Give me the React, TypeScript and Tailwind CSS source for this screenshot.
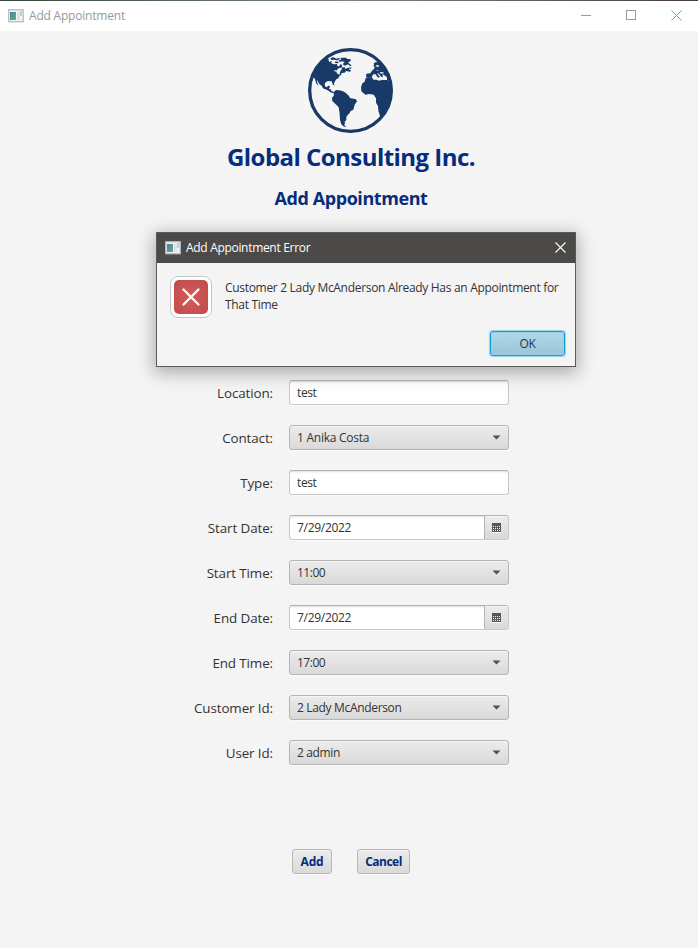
import React from 'react';

function AppIcon() {
  return (
    <svg width="16" height="14" viewBox="0 0 16 14" className="shrink-0">
      <defs>
        <linearGradient id="screen" x1="0" y1="0" x2="1" y2="1">
          <stop offset="0" stopColor="#4a7fa5" />
          <stop offset="1" stopColor="#5fae84" />
        </linearGradient>
      </defs>
      <rect x="0.75" y="0.75" width="14.5" height="12" fill="#f4f4f4" stroke="#b6bbbf" strokeWidth="1.3" />
      <rect x="2" y="3" width="6" height="8" fill="url(#screen)" />
      <rect x="9" y="3" width="3" height="8" fill="#dfe1e3" />
      <rect x="12" y="2" width="2" height="5" fill="#b5d6cf" />
    </svg>
  );
}

function Globe() {
  return (
    <svg width="100" height="100" viewBox="0 0 300 300" fill="#183a68">
      <clipPath id="disc">
        <circle cx="151.5" cy="151.5" r="125" />
      </clipPath>
      <g clipPath="url(#disc)">
        <path d="M30 110L60 65L85 55L87 66L95 63L94 70L102 73L111 72L112 78L119 79L120 72L127 76L125 83L117 84L111 89L108 94L112 101L119 104L120 96L124 90L127 82L134 82L137 88L141 84L147 83L149 90L154 92L150 95L138 93L134 98L125 99L123 105L118 108L115 115L109 118L105 124L102 130L103 137L98 133L95 124L84 123L77 127L74 132L75 139L80 142L85 137L90 139L87 147L94 149L94 154L101 155L102 160L94 158L83 151L69 145L65 137L58 132L51 119L52 129L57 137L49 131L45 117L39 110Z" />
        <path d="M91 54L100 52L109 56L118 54L120 57L112 61L103 59L94 60ZM121 53L138 53L142 57L153 58L151 64L144 67L150 73L155 76L151 79L144 73L135 77L128 73L134 66L126 64L120 66L115 62L124 58ZM107 64L117 66L113 70L104 69ZM146 82L155 83L151 88Z" />
        <path d="M102 155L108 150L118 151L127 153L137 158L147 168L150 174L168 178L171 184L164 194L160 209L152 213L149 219L143 225L139 231L139 240L134 245L135 251L132 255L139 260L132 260L124 253L120 240L119 222L116 202L107 193L97 183L96 173L101 168Z" />
        <path d="M197 114L205 112L216 112L220 119L230 119L237 122L246 120L263 120L285 145L270 200L247 226L240 228L235 212L234 198L228 188L228 175L221 164L208 162L196 164L184 154L183 142L187 130L194 125Z" />
        <path d="M199 101L211 100L216 92L221 88L225 80L221 80L222 68L232 66L240 64L270 90L285 122L263 120L261 119L261 112L253 106L247 102L249 110L244 111L239 104L234 99L232 102L240 110L234 113L226 102L218 104L216 111L207 113L198 112Z" />
      </g>
      <path d="M101 91L109 91L106 96ZM116 91L122 90L119 94ZM232 74L238 78L234 82L226 78ZM228 91L235 90L233 93ZM238 97L249 96L252 100L243 101Z" fill="#e0e4e8" />
      <circle cx="151.5" cy="151.5" r="122.5" fill="none" stroke="#183a68" strokeWidth="10" />
    </svg>
  );
}

function CalendarIcon() {
  return (
    <svg width="9" height="10" viewBox="0 0 9 10" shapeRendering="crispEdges">
      <path d="M0 0H9V9H0Z" fill="#555" />
      <path d="M1 3h1v1H1zM3 3h1v1H3zM5 3h1v1H5zM7 3h1v1H7zM1 5h1v1H1zM3 5h1v1H3zM5 5h1v1H5zM7 5h1v1H7zM1 7h1v1H1zM3 7h1v1H3zM5 7h1v1H5zM7 7h1v1H7z" fill="#f2f2f2" />
      <path d="M0 9H9V10H0Z" fill="#fff" />
    </svg>
  );
}

type Kind = 'text' | 'select' | 'date';

const fields: { label: string; value: string; kind: Kind; valueTrack: string }[] = [
  { label: 'Location:', value: 'test', kind: 'text', valueTrack: 'tracking-[-0.4px]' },
  { label: 'Contact:', value: '1 Anika Costa', kind: 'select', valueTrack: 'tracking-[-0.25px]' },
  { label: 'Type:', value: 'test', kind: 'text', valueTrack: 'tracking-[-0.4px]' },
  { label: 'Start Date:', value: '7/29/2022', kind: 'date', valueTrack: 'tracking-[-0.3px]' },
  { label: 'Start Time:', value: '11:00', kind: 'select', valueTrack: 'tracking-[-0.5px]' },
  { label: 'End Date:', value: '7/29/2022', kind: 'date', valueTrack: 'tracking-[-0.3px]' },
  { label: 'End Time:', value: '17:00', kind: 'select', valueTrack: 'tracking-[-0.5px]' },
  { label: 'Customer Id:', value: '2 Lady McAnderson', kind: 'select', valueTrack: 'tracking-[-0.33px]' },
  { label: 'User Id:', value: '2 admin', kind: 'select', valueTrack: 'tracking-[-0.35px]' },
];

const raised = 'bg-gradient-to-b from-[#ececec] to-[#d9d9d9] shadow-[inset_0_1px_0_#f5f5f5,0_1px_0_#fafafa]';

function Field({ value, kind, track }: { value: string; kind: Kind; track: string }) {
  const text = <span className={`whitespace-nowrap ${track}`}>{value}</span>;
  if (kind === 'select') {
    return (
      <div className={`flex h-[25px] w-[220px] items-center justify-between rounded-[3px] border border-[#b5b5b5] pl-[7px] pr-[7px] text-[12px] leading-4 ${raised}`}>
        {text}
        <svg width="9" height="5" viewBox="0 0 9 5"><path d="M0.5 0.5H8.5L4.5 4.6Z" fill="#505050" /></svg>
      </div>
    );
  }
  return (
    <div className="flex h-[25px] w-[220px] items-stretch overflow-hidden rounded-[3px] border border-[#c8c8c8] border-t-[#b2b2b2] bg-white text-[12px] leading-4 shadow-[inset_0_2px_2px_-1px_#dedede,0_1px_0_#fafafa]">
      <div className="flex flex-1 items-center pl-[7px]">{text}</div>
      {kind === 'date' && (
        <div className={`flex w-[24px] items-center justify-center border-l border-[#b5b5b5] ${raised}`}>
          <CalendarIcon />
        </div>
      )}
    </div>
  );
}

function ErrorDialog() {
  return (
    <div className="absolute left-[156px] top-[232px] flex h-[135px] w-[420px] flex-col border border-[#5a5a5a] bg-[#f4f4f4] shadow-[0_4px_16px_2px_rgba(0,0,0,0.3)]">
      <div className="flex h-[30px] shrink-0 items-center bg-[#4c4a48] pl-2 pr-[9px] text-[12px] text-white">
        <AppIcon />
        <span className="ml-[5px] flex-1 whitespace-nowrap tracking-[-0.31px]">Add Appointment Error</span>
        <svg width="11" height="11" viewBox="0 0 11 11" stroke="#fff" strokeWidth="1.1" className="mb-[2px]"><path d="M.5 .5L10.5 10.5M10.5 .5L.5 10.5" /></svg>
      </div>
      <div className="flex pl-[13px] pt-[13px]">
        <div className="flex h-[42px] w-[42px] shrink-0 items-center justify-center rounded-[8px] border border-[#c6c6c6] bg-white">
          <div className="flex h-[34px] w-[34px] items-center justify-center rounded-[5px] bg-[radial-gradient(#d95a5c,#bd4c49)]">
            <svg width="18" height="18" viewBox="0 0 18 18" stroke="#fff" strokeWidth="2.2" strokeLinecap="round"><path d="M1.5 1.5L16.5 16.5M16.5 1.5L1.5 16.5" /></svg>
          </div>
        </div>
        <p className="ml-[13px] mt-[3px] whitespace-nowrap text-[12px] leading-[17px] tracking-[-0.31px]">
          Customer 2 Lady McAnderson Already Has an Appointment for<br />That Time
        </p>
      </div>
      <button className="ml-[333px] mt-[13px] h-[25px] w-[75px] shrink-0 rounded-[3px] border border-[#0aa0d0] bg-gradient-to-b from-[#b1d9ea] to-[#9bc4d6] text-[12px] tracking-[-0.3px] shadow-[0_0_1px_1px_#8ed8ee,inset_0_0_0_1px_#9bcfe2]">
        OK
      </button>
    </div>
  );
}

export default function App() {
  return (
    <div className="relative flex h-[948px] w-[698px] flex-col overflow-hidden bg-[#f4f4f4] font-['Open_Sans','Noto_Sans',sans-serif] text-[#333]">
      <div className="h-px shrink-0 bg-gradient-to-r from-[#36463b] via-[#7a858a] to-[#4a3c35]" />
      <header className="flex h-[30px] shrink-0 items-center bg-white pl-2 pr-[16px] text-[12px] text-[#999]">
        <AppIcon />
        <span className="ml-[5px] flex-1 whitespace-nowrap tracking-[-0.2px]">Add Appointment</span>
        <svg width="101" height="11" viewBox="0 0 101 11" fill="none" stroke="#999" className="mb-[2px]">
          <path d="M0 5.5H10" />
          <rect x="45.5" y="0.5" width="9" height="9" />
          <path d="M90.5 .5L100.5 10.5M100.5 .5L90.5 10.5" />
        </svg>
      </header>
      <main className="flex flex-col">
        <div className="ml-[277px] mt-[9px] h-[100px] w-[147px] bg-[#f5f5f5] pl-[23px]">
          <Globe />
        </div>
        <h1 className="mt-[1px] w-[702px] text-center text-[24px] font-bold leading-8 tracking-[-0.54px] text-[#062c7c]">Global Consulting Inc.</h1>
        <h2 className="mt-[13px] w-[702px] text-center text-[18px] font-bold leading-6 tracking-[-0.43px] text-[#062c7c]">Add Appointment</h2>
        <div className="mt-[170px] flex flex-col gap-5">
          {fields.map((f) => (
            <div key={f.label} className="flex h-[25px] items-center">
              <label className="mr-[16px] w-[273px] whitespace-nowrap text-right text-[13.4px] leading-5 tracking-[-0.1px]">{f.label}</label>
              <Field value={f.value} kind={f.kind} track={f.valueTrack} />
            </div>
          ))}
        </div>
        <div className="mt-[84px] flex gap-[25px] pl-[292px] text-[12px] font-bold text-[#062c7c]">
          <button className={`h-[25px] w-[40px] rounded-[3px] border border-[#b8b8b8] tracking-[-0.2px] ${raised}`}>Add</button>
          <button className={`h-[25px] w-[53px] rounded-[3px] border border-[#b8b8b8] tracking-[-0.5px] ${raised}`}>Cancel</button>
        </div>
      </main>
      <ErrorDialog />
    </div>
  );
}
